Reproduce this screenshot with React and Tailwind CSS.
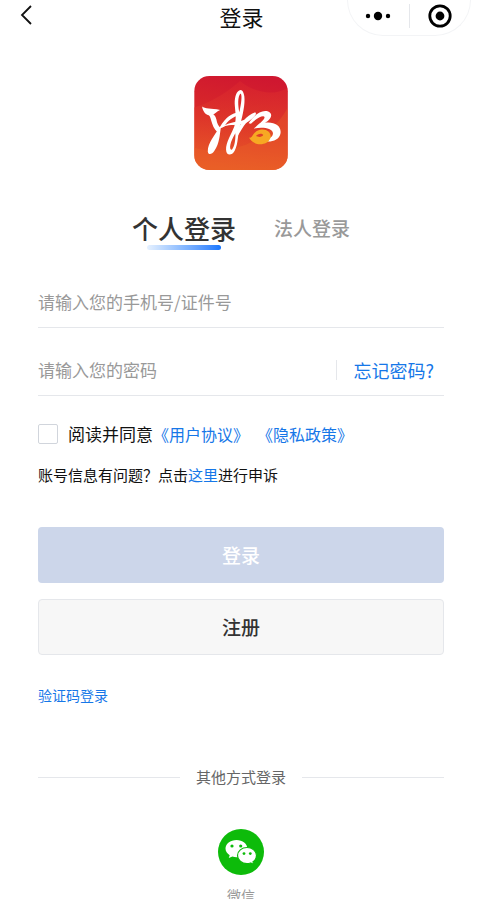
import { useState } from 'react';

function BackIcon() {
  return (
    <svg width="12" height="22" viewBox="0 0 12 22" fill="none" aria-hidden="true">
      <path d="M11 2 L2 11 L11 20" stroke="#111" strokeWidth="1.8" />
    </svg>
  );
}

function MoreIcon() {
  return (
    <svg width="26" height="10" viewBox="0 0 26 10" aria-hidden="true">
      <circle cx="3" cy="5" r="2.2" />
      <circle cx="13" cy="5" r="4.2" />
      <circle cx="23" cy="5" r="2.2" />
    </svg>
  );
}

function CloseIcon() {
  return (
    <svg width="24" height="24" viewBox="0 0 24 24" aria-hidden="true">
      <circle cx="12" cy="12" r="10.2" fill="none" stroke="#000" strokeWidth="2.8" />
      <circle cx="12" cy="12" r="4.4" />
    </svg>
  );
}

function AppLogo() {
  return (
    <svg className="size-[94px]" viewBox="27 25 282 283" role="img" aria-label="湘">
      <defs>
        <linearGradient id="logo-bg" x1="0.6" y1="0" x2="0.4" y2="1">
          <stop offset="0" stopColor="#cf1730" />
          <stop offset="0.5" stopColor="#d92a28" />
          <stop offset="1" stopColor="#e85a26" />
        </linearGradient>
        <linearGradient id="logo-wave" x1="0" y1="0" x2="0" y2="1">
          <stop offset="0" stopColor="#d9232e" />
          <stop offset="1" stopColor="#ea5f27" />
        </linearGradient>
        <clipPath id="logo-clip">
          <rect x="27" y="25" width="282" height="283" rx="46" />
        </clipPath>
      </defs>
      <g clipPath="url(#logo-clip)">
        <rect x="27" y="25" width="282" height="283" fill="url(#logo-bg)" />
        <path d="M27 120 C90 100 130 70 165 40 C200 70 260 90 309 60 L309 308 L27 308 Z" fill="url(#logo-wave)" opacity="0.6" />
        <path d="M27 240 C120 270 250 230 309 120 L309 308 L27 308 Z" fill="#ec6428" opacity="0.35" />
      </g>
      <g fill="#fff">
        <path d="M51 117 C59 124 78 122 105 127 C94 131 90 139 81 143 C66 147 53 135 51 117 Z" />
        <path d="M66 139 C82 134 90 142 94 156 C96 168 100 176 106 181 L97 194 C86 184 82 172 78 158 C75 147 73 142 66 139 Z" />
        <path d="M107 182 C104 202 103 228 88 250 C80 262 69 263 68 252 C68 228 88 204 105 178 C121 150 141 136 162 135 L162 144 C145 147 127 160 118 177 Z" />
        <path fillRule="evenodd" d="M167 67 C154 69 149 87 149 108 C150 134 156 150 148 176 C140 198 122 224 123 247 C124 266 140 266 149 250 C161 226 157 200 166 170 C173 143 181 110 178 86 C176 74 173 67 167 67 Z M167 78 C172 84 169 108 163 134 C159 116 157 86 167 78 Z M151 197 C152 218 148 238 141 246 C136 250 134 241 136 232 C138 220 144 210 151 197 Z" />
        <path d="M107 183 C124 166 150 164 170 160 C186 156 196 148 209 138 L212 142 C199 158 184 170 162 172 C140 173 120 172 107 183 Z" />
        <path d="M153 193 C165 172 182 144 211 134 L214 140 C190 152 176 176 158 206 Z" />
        <path d="M191 167 C208 142 229 126 248 131 C267 137 259 157 240 166 C268 162 290 175 287 197 C284 218 258 225 240 221 C254 214 266 206 264 196 C261 182 235 178 207 183 C220 170 238 158 239 149 C237 141 216 150 198 169 Z" />
      </g>
      <path fillRule="evenodd" d="M192 210 C203 217 202 192 225 187 C247 182 262 198 256 213 C247 236 205 237 192 210 Z M213 206 C221 210 234 209 235 202 C231 196 217 198 213 206 Z" fill="#f7a823" />
    </svg>
  );
}

function WechatIcon() {
  return (
    <svg className="size-[46px]" viewBox="0 0 46 46" aria-hidden="true">
      <circle cx="23" cy="23" r="23" fill="#0dbb0a" />
      <path d="M18.5 11 C12.3 11 7.5 14.9 7.5 19.6 C7.5 22.3 9.1 24.7 11.7 26.3 L10.8 29 L14.4 27.5 C15.7 27.9 17.2 28.2 18.5 28.2 C24.6 28.2 29.4 24.4 29.4 19.6 C29.4 14.9 24.6 11 18.5 11 Z" fill="#fff" />
      <path d="M29 18.5 C23.7 18.5 19.5 22.1 19.5 26.5 C19.5 31 23.7 34.6 29 34.6 C30.2 34.6 31.5 34.3 32.6 34 L35.8 35.6 L35 32.8 C37.2 31.4 38.5 29.1 38.5 26.5 C38.5 22.1 34.3 18.5 29 18.5 Z" fill="#fff" stroke="#0dbb0a" strokeWidth="1.2" />
      <g fill="#0dbb0a">
        <circle cx="14" cy="17" r="1.6" />
        <circle cx="22.7" cy="17" r="1.6" />
        <circle cx="26" cy="24.6" r="1.4" />
        <circle cx="32.3" cy="24.6" r="1.4" />
      </g>
    </svg>
  );
}

function App() {
  const [tab, setTab] = useState('personal');
  const [account, setAccount] = useState('');
  const [password, setPassword] = useState('');
  const [agreed, setAgreed] = useState(false);

  const tabs = [
    { id: 'personal', label: '个人登录' },
    { id: 'legal', label: '法人登录' }
  ];

  return (
    <div className="h-screen overflow-y-auto [scrollbar-width:none] bg-white font-['Noto_Sans_CJK_SC',sans-serif] text-[#111]">
      <header className="grid grid-cols-[1fr_auto_1fr] items-start pr-[11px] pl-5">
        <button type="button" aria-label="返回" className="justify-self-start pt-1">
          <BackIcon />
        </button>
        <h1 className="-ml-2 text-center text-[22px] leading-8">登录</h1>
        <div className="flex h-9 w-[124px] items-start justify-self-end rounded-b-full border border-t-0 border-gray-100">
          <button type="button" aria-label="更多" className="flex h-8 flex-1 items-center justify-center">
            <MoreIcon />
          </button>
          <span className="mt-1 h-6 w-px bg-gray-200"></span>
          <button type="button" aria-label="关闭" className="flex h-8 flex-1 items-center justify-center">
            <CloseIcon />
          </button>
        </div>
      </header>

      <main className="px-[38px] pt-10">
        <div className="flex justify-center">
          <AppLogo />
        </div>

        <div className="mt-[38px] flex items-center justify-center gap-[38px]">
          {tabs.map((item) => (
            <button
              key={item.id}
              type="button"
              onClick={() => setTab(item.id)}
              className={`flex h-11 flex-col items-center ${
                tab === item.id
                  ? 'text-[26px] leading-10 font-medium text-[#333]'
                  : 'text-[19px] leading-10 font-medium text-[#999]'
              }`}
            >
              {item.label}
              {tab === item.id && (
                <span className="-mt-[3px] h-[5px] w-[74px] shrink-0 rounded-full bg-linear-to-r from-[#e6f1ff] to-[#1677ff]"></span>
              )}
            </button>
          ))}
        </div>

        <form onSubmit={(e) => e.preventDefault()}>
          <div className="mt-6 flex h-[52px] items-center border-b border-gray-200">
            <input
              type="text"
              aria-label="手机号/证件号"
              placeholder="请输入您的手机号/证件号"
              value={account}
              onChange={(e) => setAccount(e.target.value)}
              className="w-full text-[17px] outline-none placeholder:text-[#999]"
            />
          </div>

          <div className="mt-4 flex h-[52px] items-center border-b border-gray-200">
            <input
              type="password"
              aria-label="密码"
              placeholder="请输入您的密码"
              value={password}
              onChange={(e) => setPassword(e.target.value)}
              className="min-w-0 flex-1 text-[17px] outline-none placeholder:text-[#999]"
            />
            <a href="#forgot" className="flex items-center pr-2.5 text-lg text-[#1677e8]">
              <span className="mr-4 h-5 w-px bg-gray-200"></span>
              忘记密码?
            </a>
          </div>

          <div className="mt-6 flex h-7 items-center text-[17px]">
            <input
              id="agree"
              type="checkbox"
              checked={agreed}
              onChange={(e) => setAgreed(e.target.checked)}
              className="mr-2.5 size-5 appearance-none rounded-xs border border-gray-300 checked:bg-[#1677e8]"
            />
            <label htmlFor="agree">阅读并同意</label>
            <div className="flex gap-2 text-base text-[#1677e8]">
              <a href="#terms">《用户协议》</a>
              <a href="#privacy">《隐私政策》</a>
            </div>
          </div>

          <p className="mt-[15px] text-[15px] leading-6">
            账号信息有问题？点击<a href="#appeal" className="text-[#1677e8]">这里</a>进行申诉
          </p>

          <button
            type="submit"
            className="mt-10 block h-14 w-full rounded-sm bg-[#ccd6ea] text-[19px] font-medium text-white"
          >
            登录
          </button>
          <button
            type="button"
            className="mt-4 block h-14 w-full rounded-sm border border-gray-200 bg-[#f7f7f7] text-[19px] font-medium text-[#333]"
          >
            注册
          </button>
        </form>

        <a href="#sms" className="mt-7 inline-block text-sm leading-6 text-[#1677e8]">验证码登录</a>

        <div className="mt-[58px] flex items-center gap-4 text-[15px] leading-6 text-[#666]">
          <span className="h-px flex-1 bg-gray-200"></span>
          其他方式登录
          <span className="h-px flex-1 bg-gray-200"></span>
        </div>

        <button type="button" className="mx-auto mt-10 flex flex-col items-center gap-2 pb-6 text-sm leading-6 text-[#999]">
          <WechatIcon />
          微信
        </button>
      </main>
    </div>
  );
}

export default App;
